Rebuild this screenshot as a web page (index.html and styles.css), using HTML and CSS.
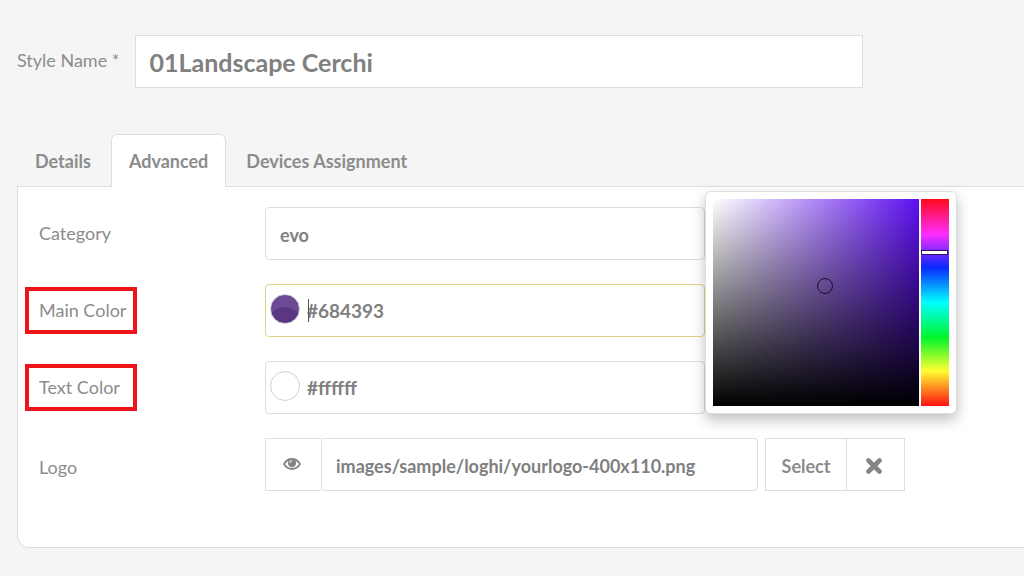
FILE: index.html
```html
<!DOCTYPE html>
<html lang="en">
<head>
  <meta charset="UTF-8">
  <meta name="viewport" content="width=device-width, initial-scale=1.0">
  <title>Edit Style</title>
  <link rel="stylesheet" href="styles.css">
</head>
<body>
  <form class="style-form">

    <div class="name-row">
      <label for="style-name">Style Name *</label>
      <input class="name-input" type="text" id="style-name" value="01Landscape Cerchi">
    </div>

    <!-- Tabs -->
    <nav class="tabs" role="tablist">
      <button class="tab" type="button" role="tab">Details</button>
      <button class="tab active" type="button" role="tab" aria-selected="true">Advanced</button>
      <button class="tab" type="button" role="tab">Devices Assignment</button>
    </nav>

    <section class="panel">
      <div class="row">
        <label class="label" for="category">Category</label>
        <div class="field">
          <input class="input" type="text" id="category" value="evo">
        </div>
      </div>

      <div class="row">
        <label class="label marked" for="main-color">Main Color</label>
        <div class="field">
          <input class="input color focused" type="text" id="main-color" value="#684393">
          <span class="swatch purple"></span>
          <span class="caret"></span>

          <!-- Color picker -->
          <div class="picker">
            <div class="shade"><span class="shade-pointer"></span></div>
            <div class="hue"><span class="hue-pointer"></span></div>
          </div>
        </div>
      </div>

      <div class="row">
        <label class="label marked" for="text-color">Text Color</label>
        <div class="field">
          <input class="input color" type="text" id="text-color" value="#ffffff">
          <span class="swatch white"></span>
        </div>
      </div>

      <div class="row row-logo">
        <label class="label" for="logo">Logo</label>
        <div class="media">
          <button class="btn preview" type="button" aria-label="Preview">
            <svg width="18" height="12" viewBox="0 0 18 12">
              <path d="M1 6C3 2.600 5.800 1 9 1s6 1.600 8 5c-2 3.400-4.800 5-8 5S3 9.400 1 6z" fill="none" stroke="#858585" stroke-width="1.800"/>
              <circle cx="9" cy="5" r="4.200" fill="#858585"/>
              <path d="M6.700 5A2.300 2.300 0 0 1 9 2.700" fill="none" stroke="#fff" stroke-width="1"/>
            </svg>
          </button>
          <input class="input path" type="text" id="logo" value="images/sample/loghi/yourlogo-400x110.png">
          <div class="btn-group">
            <button class="btn select" type="button">Select</button>
            <button class="btn clear" type="button" aria-label="Clear">
              <svg width="16" height="16" viewBox="0 0 16 16">
                <path d="M2.500 2.500l11 11M13.500 2.500l-11 11" stroke="#858585" stroke-width="4.600" stroke-linecap="round"/>
              </svg>
            </button>
          </div>
        </div>
      </div>
    </section>

  </form>
</body>
</html>
```

FILE: styles.css
```css
* { margin: 0; padding: 0; box-sizing: border-box; }
body {
  background: #f5f5f5; color: #8c8c8c; overflow-x: hidden;
  font-family: Lato, "Open Sans", sans-serif; font-size: 18px;
}
input, button { font-family: inherit; font-size: 18px; font-weight: bold; color: #808080; outline: none; }
button { cursor: pointer; }

.style-form { padding: 35px 0 28px 17px; }

.name-row { display: flex; align-items: center; gap: 16px; width: 84%; }
.name-row label { padding-bottom: 4px; white-space: nowrap; }
.name-input {
  flex: 1; min-width: 0; height: 53px; padding: 0 13px;
  background: #fff; border: 1px solid #dedede; font-size: 25px;
}

.tabs { display: flex; gap: 2px; margin-top: 46px; }
.tab {
  height: 53px; padding: 0 17px; background: none;
  border: 1px solid transparent; border-bottom: none; border-radius: 6px 6px 0 0;
  color: #8c8c8c;
}
.tab.active { position: relative; background: #fff; border-color: #dedede; }

.panel {
  display: flex; flex-direction: column; gap: 24px;
  margin-top: -1px; padding: 20px 7px 56px;
  background: #fff; border: 1px solid #dedede; border-right: none;
  border-radius: 0 0 0 12px;
}

.row { display: grid; grid-template-columns: 240px 1fr; align-items: center; }
.row-logo { align-items: end; }
.label {
  justify-self: start; width: 112px; padding: 8px 10px;
  border: 4px solid transparent; line-height: 23px; white-space: nowrap;
}
.label.marked { border-color: #ed1519; }

.field { position: relative; max-width: 440px; }
.input {
  display: block; width: 100%; height: 53px; padding: 3px 14px 0;
  background: #fff; border: 1px solid #dedede; border-radius: 4px;
}
.input.color { padding: 0 0 0 41px; font-size: 19px; }
.input.focused { border-color: #e3d38a; }

.swatch {
  position: absolute; left: 5px; top: 10px; width: 30px; height: 30px;
  border: 1px solid #d0d0d0; border-radius: 50%;
}
.swatch.purple { background: radial-gradient(circle at 50% 110%, #5b3781 18px, #6c4a96 19px); }
.swatch.white { background: #fff; }
.caret { position: absolute; left: 43px; top: 15px; width: 1px; height: 23px; background: #555; }

.picker {
  position: absolute; left: 100%; top: -93px; z-index: 10;
  display: flex; gap: 2px; padding: 7px;
  background: #fff; border: 1px solid #dedede; border-radius: 6px;
  box-shadow: 0 6px 14px rgba(0, 0, 0, 0.25);
}
.shade {
  position: relative; width: 206px; height: 207px;
  background: linear-gradient(to top, #000, transparent), linear-gradient(to right, #fff, #5e10f0);
}
.shade-pointer {
  position: absolute; left: 104px; top: 79px; width: 16px; height: 16px;
  border: 1px solid #1d0b35; border-radius: 50%;
}
.hue {
  position: relative; width: 28px; height: 207px;
  background: linear-gradient(#ff0a1a, #ff2cff 17%, #0a28ff 33%, #00ffff 50%, #00f52a 67%, #ffff30 83%, #ff1010);
}
.hue-pointer {
  position: absolute; left: 0; top: 51px; width: 27px; height: 5px;
  background: #fff; border: 1px solid #2b1260;
}

.media { display: flex; max-width: 640px; }
.btn {
  display: flex; align-items: center; justify-content: center;
  height: 53px; background: #fff; border: 1px solid #dedede; color: #8c8c8c;
}
.preview { width: 56px; padding: 0 4px 2px 0; border-right: none; }
.path { flex: 1; min-width: 0; }
.btn-group { display: flex; margin-left: 7px; }
.select { width: 82px; padding-top: 3px; }
.clear { width: 58px; padding: 3px 4px 0 0; border-left: none; }
```
